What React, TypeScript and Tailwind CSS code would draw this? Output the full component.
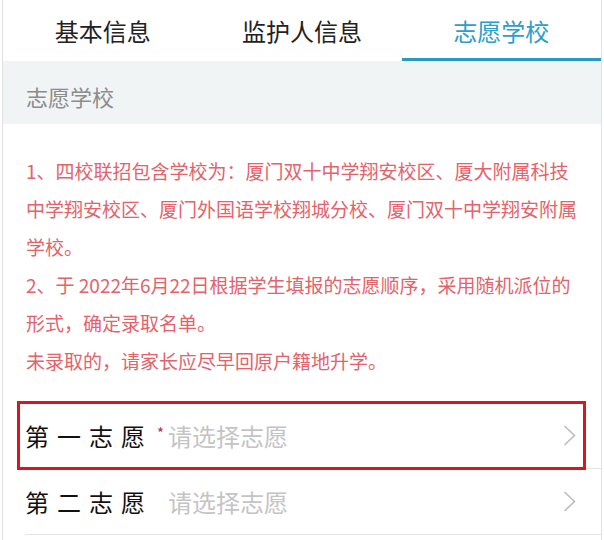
import React from "react";

const Chevron = () => (
  <svg width="13" height="21" viewBox="0 0 13 21" fill="none">
    <polyline points="1.5,1 11.5,10.5 1.5,20" stroke="#bdbdbd" strokeWidth="1.6" fill="none" />
  </svg>
);

const notice = [
  ["1、四校联招包含学校为：厦门双十中学翔安校区、厦大附属科技", "中学翔安校区、厦门外国语学校翔城分校、厦门双十中学翔安附属", "学校。"],
  ["2、于 2022年6月22日根据学生填报的志愿顺序，采用随机派位的", "形式，确定录取名单。"],
  ["未录取的，请家长应尽早回原户籍地升学。"],
];

export default function App() {
  return (
    <div className="min-h-[540px] w-[604px] bg-white font-['Noto_Sans_CJK_SC','Noto_Sans',sans-serif]">
      <div className="ml-[2px] min-h-[540px] w-[600px] border-x border-[#e2e2e2] bg-white">
        {/* Tabs */}
        <div className="flex h-[61px]">
          <div className="flex flex-1 items-center justify-center border-b-[3px] border-transparent pt-[3px] text-[24px] text-[#222]">
            基本信息
          </div>
          <div className="flex flex-1 items-center justify-center border-b-[3px] border-transparent pt-[3px] text-[24px] text-[#222]">
            监护人信息
          </div>
          <div className="flex flex-1 items-center justify-center border-b-[3px] border-[#2b98c2] pt-[3px] text-[24px] text-[#2aa0cb]">
            志愿学校
          </div>
        </div>

        {/* Section header */}
        <div className="h-[63px] bg-[#f1f4f5] pl-[23px] pt-[21px] text-[22px] leading-[28px] text-[#8c8c8c]">
          志愿学校
        </div>

        {/* Notice */}
        <div className="pb-[23px] pl-[23px] pr-[20px] pt-[28px] text-[19px] leading-[38px] text-[#e4626a]">
          {notice.map((para, i) => (
            <div key={i}>
              {para.map((line, j) => (
                <div key={j} className="whitespace-nowrap">
                  {line}
                </div>
              ))}
            </div>
          ))}
        </div>

        {/* Rows */}
        <div>
          <div className="relative ml-[22px] flex h-[66px] items-center border-b border-[#e4e4e4] pr-[25px]">
            <span className="text-[24px] tracking-[8px] text-[#111]">第一志愿</span>
            <span className="w-[15px] -translate-y-[3px] pl-[4px] text-[15px] leading-none text-[#b8323c]">*</span>
            <span className="flex-1 text-[24px] text-[#c4c4c4]">请选择志愿</span>
            <Chevron />
            <div className="pointer-events-none absolute -bottom-[2px] -left-[8px] -top-[2px] right-[15px] border-[3px] border-[#d9161d]" />
          </div>
          <div className="relative ml-[22px] flex h-[66px] items-center border-b border-[#e4e4e4] pr-[25px]">
            <span className="text-[24px] tracking-[8px] text-[#111]">第二志愿</span>
            <span className="w-[15px]" />
            <span className="flex-1 text-[24px] text-[#c4c4c4]">请选择志愿</span>
            <Chevron />
          </div>
        </div>
      </div>
    </div>
  );
}
